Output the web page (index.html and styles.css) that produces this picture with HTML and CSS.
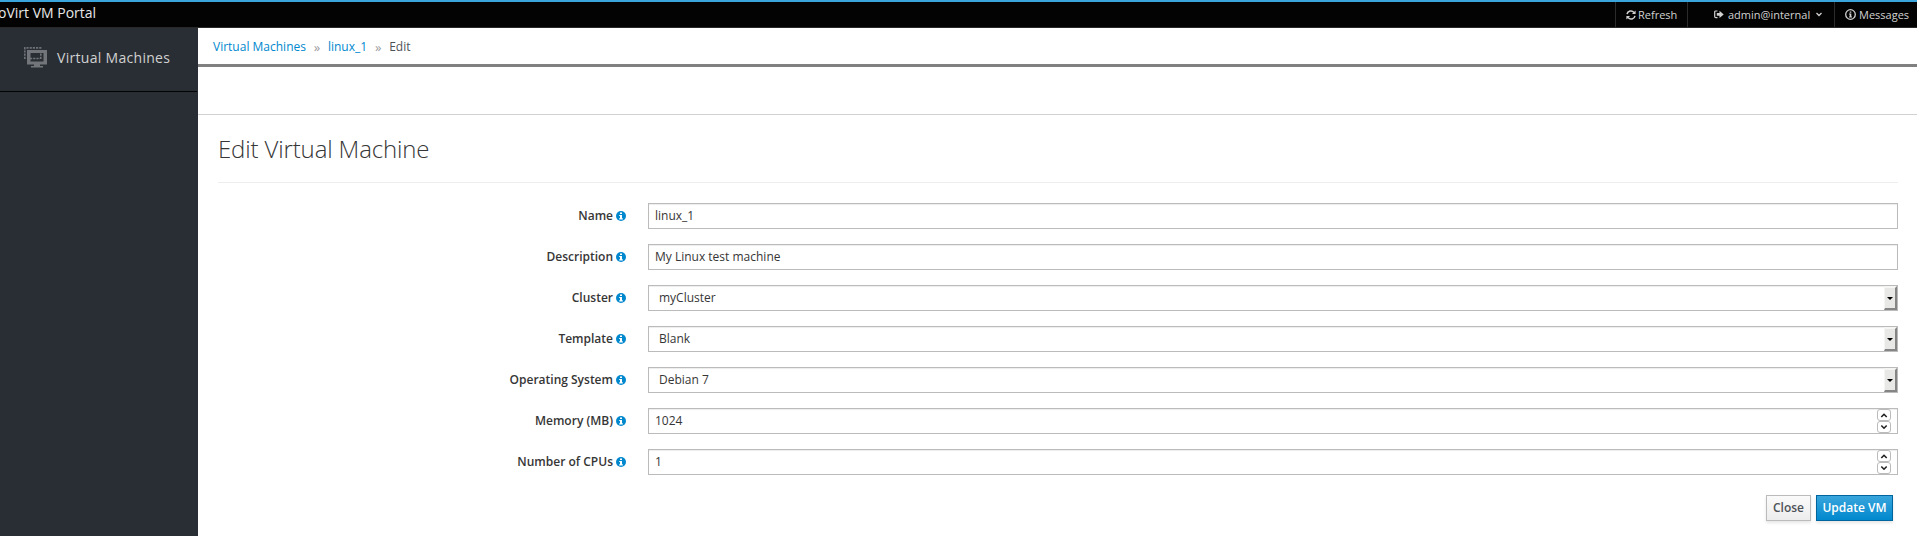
FILE: index.html
```html
<!DOCTYPE html>
<html lang="en">
<head>
<meta charset="utf-8">
<title>oVirt VM Portal</title>
<link rel="stylesheet" href="styles.css">
</head>
<body>
<svg width="0" height="0" class="symbols">
  <symbol id="info" viewBox="0 0 10 10"><circle cx="5" cy="5" r="5" fill="#0088ce"/><path d="M4 1.5h2v1.6H4zM3.2 4H6v3.2h.8v1.2H3.2V7.2H4V5.1h-.8z" fill="#fff"/></symbol>
</svg>
<header class="navbar">
  <div class="brand">oVirt VM Portal</div>
  <nav class="utility">
    <a class="item refresh"><svg width="10" height="10" viewBox="0 0 10 10"><path d="M1 4.2A4 4 0 0 1 8 2.4M9 5.8A4 4 0 0 1 2 7.6" fill="none" stroke="currentColor" stroke-width="1.5"/><path d="M9.6.4v3.7H5.9zM.4 9.6V5.9h3.7z" fill="currentColor"/></svg><span>Refresh</span></a>
    <a class="item user"><svg width="10" height="9" viewBox="0 0 10 9"><path d="M3.5 1H1.8Q.7 1 .7 2.1v4.4q0 1.1 1.1 1.1h1.7" fill="none" stroke="currentColor" stroke-width="1.2"/><path d="M2.8 3h2.7V.7L9.7 4.4 5.5 8.1V5.8H2.8z" fill="currentColor"/></svg><span>admin@internal</span><svg class="caret" width="6" height="5" viewBox="0 0 6 5"><path d="M.5 1 3 3.5 5.5 1" fill="none" stroke="currentColor" stroke-width="1.3"/></svg></a>
    <a class="item messages"><svg width="11" height="11" viewBox="0 0 11 11"><circle cx="5.5" cy="5.5" r="4.8" fill="none" stroke="currentColor" stroke-width="1.3"/><path d="M4.7 2.4h1.6v1.3H4.7zM4 4.4h2.3v3h.7v1H4v-1h.7v-2H4z" fill="currentColor"/></svg><span>Messages</span></a>
  </nav>
</header>
<div class="layout">
  <aside class="sidebar">
    <a class="side-item"><svg width="24" height="22" viewBox="0 0 24 22"><path d="M.8 12V.8H18" fill="none" stroke="#6d7176" stroke-width="1.7" stroke-dasharray="2.2 1"/><path d="M3 3h20v14.500H3zM6.500 6v8.500h13V6z" fill="#72767b" fill-rule="evenodd"/><path d="M10 17h6v2h3v1.500H7V19h3z" fill="#72767b"/><path d="M6 11.500h10M16.800 6.500v5.800" fill="none" stroke="#72767b" stroke-width="1.600" stroke-dasharray="2.2 1"/></svg><span>Virtual Machines</span></a>
  </aside>
  <main class="content">
    <div class="breadcrumb"><a>Virtual Machines</a><i>»</i><a>linux_1</a><i>»</i><span>Edit</span></div>
    <div class="toolbar"></div>
    <section class="page">
      <h1>Edit Virtual Machine</h1>
      <form>
        <div class="row"><label>Name</label><svg class="info"><use href="#info"/></svg><div class="field">linux_1</div></div>
        <div class="row"><label>Description</label><svg class="info"><use href="#info"/></svg><div class="field">My Linux test machine</div></div>
        <div class="row"><label>Cluster</label><svg class="info"><use href="#info"/></svg><div class="field select">myCluster<b class="drop"></b></div></div>
        <div class="row"><label>Template</label><svg class="info"><use href="#info"/></svg><div class="field select">Blank<b class="drop"></b></div></div>
        <div class="row"><label>Operating System</label><svg class="info"><use href="#info"/></svg><div class="field select">Debian 7<b class="drop"></b></div></div>
        <div class="row"><label>Memory (MB)</label><svg class="info"><use href="#info"/></svg><div class="field number">1024<span class="spin"><svg viewBox="0 0 12 10"><path d="M3.300 7 6 4.300 8.700 7"/></svg><svg viewBox="0 0 12 10"><path d="M3.300 3.500 6 6.200 8.700 3.500"/></svg></span></div></div>
        <div class="row"><label>Number of CPUs</label><svg class="info"><use href="#info"/></svg><div class="field number">1<span class="spin"><svg viewBox="0 0 12 10"><path d="M3.300 7 6 4.300 8.700 7"/></svg><svg viewBox="0 0 12 10"><path d="M3.300 3.500 6 6.200 8.700 3.500"/></svg></span></div></div>
        <div class="actions"><button type="button" class="btn close">Close</button><button type="button" class="btn primary">Update VM</button></div>
      </form>
    </section>
  </main>
</div>
</body>
</html>
```
FILE: styles.css
```css
* { box-sizing: border-box; }
body { margin: 0; height: 536px; overflow: hidden; background: #fff; color: #363636; font: 12px/20px "Open Sans", "Noto Sans", sans-serif; }
.symbols { display: none; }
.navbar { height: 28px; background: #030303; border-top: 2px solid #39a5dc; border-bottom: 1px solid #292929; display: flex; justify-content: space-between; }
.brand { color: #e8e8e8; font-size: 14px; line-height: 22px; margin-left: -2px; white-space: nowrap; }
.utility { display: flex; color: #d1d1d1; font-size: 11px; line-height: 26px; }
.item { display: flex; align-items: center; height: 25px; border-left: 1px solid #2b2b2b; }
.item svg { flex: none; }
.refresh { width: 72px; padding-left: 10px; gap: 2px; }
.user { width: 147px; padding-left: 26px; gap: 4px; }
.caret { margin-left: 2px; }
.messages { width: 83px; padding-left: 10px; gap: 3px; }
.layout { display: flex; height: 508px; }
.sidebar { width: 198px; background: #292e34; flex: none; }
.side-item { display: flex; align-items: center; height: 64px; width: 197px; padding: 0 0 3px 24px; gap: 9px; border-bottom: 1px solid #030303; color: #d1d1d1; font-size: 14px; letter-spacing: .3px; }
.content { flex: 1; }
.breadcrumb { height: 39px; border-bottom: 3px solid #808080; display: flex; padding: 9px 15px 0; color: #4d5258; }
.breadcrumb a { color: #0088ce; }
.breadcrumb i { font-style: normal; font-size: 13px; color: #9c9c9c; width: 22px; text-align: center; }
.toolbar { height: 48px; border-bottom: 1px solid #d1d1d1; }
.page { padding: 0 19px 0 20px; }
h1 { margin: 0 0 20px; height: 68px; font-size: 24px; font-weight: 300; line-height: 67px; letter-spacing: -.14px; border-bottom: 1px solid #ededed; }
.row { display: flex; align-items: center; height: 26px; margin-bottom: 15px; }
label { width: 395px; text-align: right; font-weight: 600; }
.info { width: 10px; height: 10px; margin: 0 22px 0 3px; flex: none; }
.field { flex: 1; height: 26px; border: 1px solid #bbb; padding: 0 6px; line-height: 23px; box-shadow: inset 0 1px 1px rgba(3,3,3,.075); display: flex; justify-content: space-between; }
.select { padding: 0 0 0 10px; }
.drop { width: 13px; height: 24px; background: #e8e8e7; border: solid; border-width: 2px 2px 2px 1px; border-color: #f5f5f4 #858585 #858585 #f5f5f4; display: flex; align-items: center; justify-content: center; }
.drop::before { content: ""; border: 3px solid transparent; border-top: 3px solid #000; border-bottom: 0; }
.spin { width: 14px; display: flex; flex-direction: column; }
.spin svg { width: 14px; height: 12px; border: 1px solid #bbb; border-radius: 3px; fill: none; stroke: #222; stroke-width: 1.6; }
.actions { display: flex; justify-content: flex-end; gap: 5px; padding: 5px 5px 0 0; }
.btn { height: 26px; padding: 0; border: 1px solid #bbb; font: 600 12px/22px "Open Sans", "Noto Sans", sans-serif; color: #4d5258; background: linear-gradient(#fafafa, #ededed); box-shadow: 0 2px 3px rgba(3,3,3,.1); }
.close { width: 45px; }
.primary { width: 77px; color: #fff; border-color: #00659c; background: linear-gradient(#39a5dc, #0088ce); }
```
